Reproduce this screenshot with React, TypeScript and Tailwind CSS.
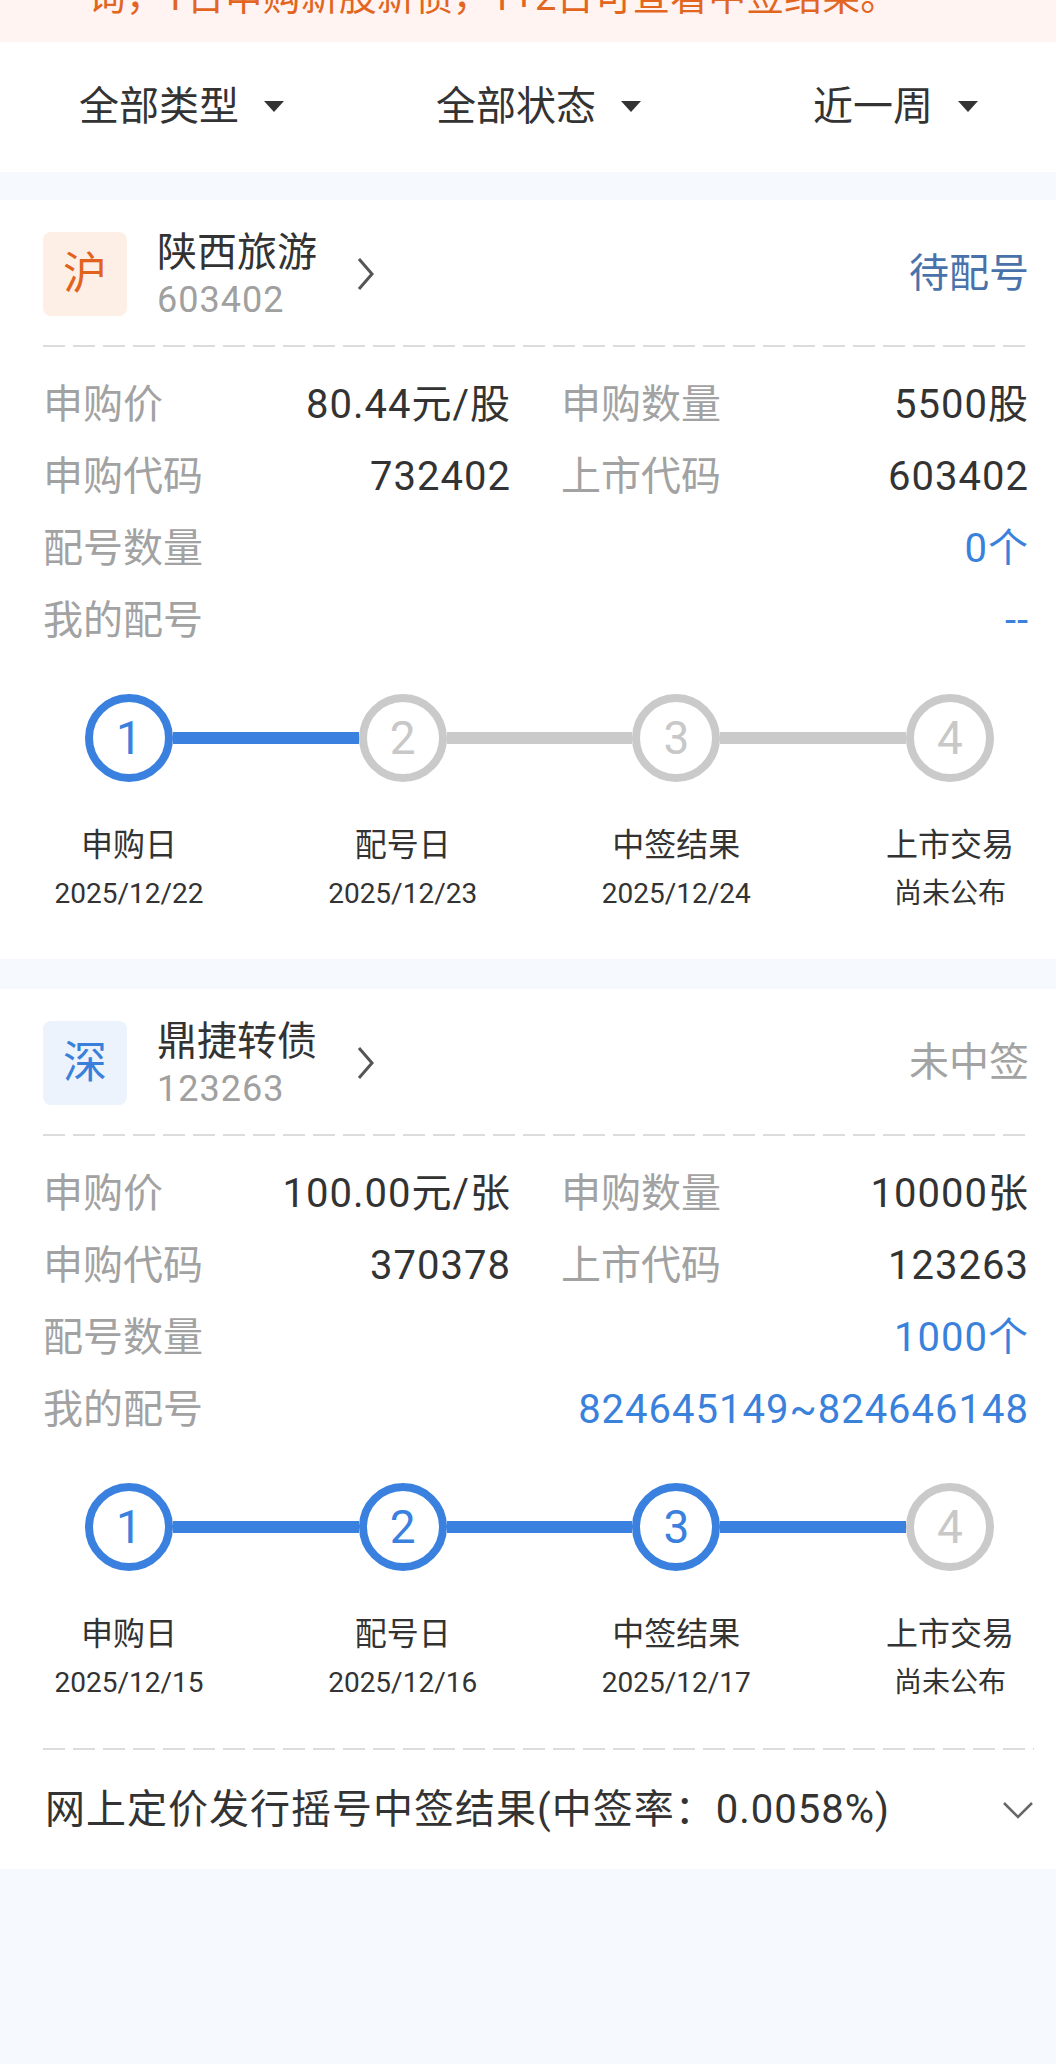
const FONT = { fontFamily: 'Roboto, "Noto Sans CJK SC", "Noto Sans", sans-serif' };

type Step = { title: string; date: string; done: boolean };

type Item = {
  market: string;
  marketTone: "sh" | "sz";
  name: string;
  code: string;
  status: string;
  statusTone: "blue" | "gray";
  price: string;
  qty: string;
  applyCode: string;
  listCode: string;
  matchCount: string;
  myMatch: string;
  steps: Step[];
  result?: string;
};

const items: Item[] = [
  {
    market: "沪",
    marketTone: "sh",
    name: "陕西旅游",
    code: "603402",
    status: "待配号",
    statusTone: "blue",
    price: "80.44元/股",
    qty: "5500股",
    applyCode: "732402",
    listCode: "603402",
    matchCount: "0个",
    myMatch: "--",
    steps: [
      { title: "申购日", date: "2025/12/22", done: true },
      { title: "配号日", date: "2025/12/23", done: false },
      { title: "中签结果", date: "2025/12/24", done: false },
      { title: "上市交易", date: "尚未公布", done: false },
    ],
  },
  {
    market: "深",
    marketTone: "sz",
    name: "鼎捷转债",
    code: "123263",
    status: "未中签",
    statusTone: "gray",
    price: "100.00元/张",
    qty: "10000张",
    applyCode: "370378",
    listCode: "123263",
    matchCount: "1000个",
    myMatch: "824645149~824646148",
    steps: [
      { title: "申购日", date: "2025/12/15", done: true },
      { title: "配号日", date: "2025/12/16", done: true },
      { title: "中签结果", date: "2025/12/17", done: true },
      { title: "上市交易", date: "尚未公布", done: false },
    ],
    result: "网上定价发行摇号中签结果(中签率：0.0058%)",
  },
];

const DashedLine = () => (
  <div className="h-[2px] w-full bg-[repeating-linear-gradient(to_right,#dcdcdc_0px,#dcdcdc_22px,transparent_22px,transparent_30px)]" />
);

const Caret = () => (
  <svg width="20" height="12" viewBox="0 0 20 12" className="shrink-0">
    <polygon points="0,0 20,0 10,11" fill="#333333" />
  </svg>
);

function StepCircle({ n, done }: { n: number; done: boolean }) {
  return (
    <div
      className={
        done
          ? "w-[88px] h-[88px] shrink-0 rounded-full border-[8px] border-[#3a81df] bg-white flex items-center justify-center text-[46px] leading-none text-[#3a81df]"
          : "w-[88px] h-[88px] shrink-0 rounded-full border-[8px] border-[#cacaca] bg-white flex items-center justify-center text-[46px] leading-none text-[#c8c8c8]"
      }
    >
      {n}
    </div>
  );
}

function Steps({ steps }: { steps: Step[] }) {
  return (
    <div className="flex flex-col">
      {/* circles and connectors */}
      <div className="ml-[85px] mr-[62px] flex items-center">
        {steps.map((step, i) => (
          <div key={step.title} className={i < steps.length - 1 ? "flex flex-1 items-center" : "flex items-center"}>
            <StepCircle n={i + 1} done={step.done} />
            {i < steps.length - 1 && (
              <div className={step.done ? "h-[12px] flex-1 bg-[#3a81df]" : "h-[12px] flex-1 bg-[#cacaca]"} />
            )}
          </div>
        ))}
      </div>

      {/* labels */}
      <div className="ml-[39px] w-[1001px] mt-[41px] flex justify-between">
        {steps.map((step) => (
          <div key={step.title} className="w-[180px] flex flex-col items-center">
            <span className="text-[32px] leading-[44px] text-[#333333]">{step.title}</span>
            <span className="mt-[7px] text-[28px] leading-[40px] text-[#333333]">{step.date}</span>
          </div>
        ))}
      </div>
    </div>
  );
}

function Row({ label, value, blue }: { label: string; value: string; blue?: boolean }) {
  return (
    <>
      <span className="text-[#a2a2a2]">{label}</span>
      <span className={blue ? "tracking-[1px] text-[#3a81dc]" : "tracking-[1px] text-[#333333]"}>{value}</span>
    </>
  );
}

function Card({ item }: { item: Item }) {
  const badge =
    item.marketTone === "sh"
      ? "bg-[#fdeee6] text-[#e0621c]"
      : "bg-[#ecf3fd] text-[#3a80da]";
  const status = item.statusTone === "blue" ? "text-[#4a72aa]" : "text-[#a3a3a3]";

  return (
    <div className="bg-white pt-[32px] pb-[45px]">
      <div className="pl-[43px] pr-[27px]">
        {/* header */}
        <div className="flex items-center">
          <div className={`w-[84px] h-[84px] rounded-[8px] flex items-center justify-center text-[44px] leading-none ${badge}`}>
            {item.market}
          </div>
          <div className="ml-[30px] h-[84px] flex flex-col justify-between">
            <span className="text-[40px] leading-[42px] text-[#333333]">{item.name}</span>
            <span className="text-[36px] leading-[40px] tracking-[1px] -mb-[4px] text-[#a0a0a0]">{item.code}</span>
          </div>
          <svg width="18" height="34" viewBox="0 0 18 34" className="ml-[40px] shrink-0">
            <polyline points="2,2 15,17 2,32" fill="none" stroke="#555555" strokeWidth="3" />
          </svg>
          <span className={`ml-auto text-[40px] leading-[48px] ${status}`}>{item.status}</span>
        </div>

        <div className="mt-[29px]">
          <DashedLine />
        </div>

        {/* details */}
        <div className="mt-[22px] grid grid-cols-2 gap-x-[50px] text-[40px]">
          <div className="h-[72px] flex items-center justify-between">
            <Row label="申购价" value={item.price} />
          </div>
          <div className="h-[72px] flex items-center justify-between">
            <Row label="申购数量" value={item.qty} />
          </div>
          <div className="h-[72px] flex items-center justify-between">
            <Row label="申购代码" value={item.applyCode} />
          </div>
          <div className="h-[72px] flex items-center justify-between">
            <Row label="上市代码" value={item.listCode} />
          </div>
          <div className="col-span-2 h-[72px] flex items-center justify-between">
            <Row label="配号数量" value={item.matchCount} blue />
          </div>
          <div className="col-span-2 h-[72px] flex items-center justify-between">
            <Row label="我的配号" value={item.myMatch} blue />
          </div>
        </div>
      </div>

      <div className="mt-[37px]">
        <Steps steps={item.steps} />
      </div>

      {item.result && (
        <div className="pl-[43px] pr-[22px] mt-[45px] -mb-[45px]">
          <DashedLine />
          <div className="h-[119px] flex items-center justify-between">
            <span className="pl-[2px] text-[40px] leading-[48px] tracking-[1px] text-[#333333]">{item.result}</span>
            <svg width="32" height="18" viewBox="0 0 32 18" className="shrink-0">
              <polyline points="2,2 16,16 30,2" fill="none" stroke="#666666" strokeWidth="2.5" />
            </svg>
          </div>
        </div>
      )}
    </div>
  );
}

export default function App() {
  return (
    <div className="w-[1056px] min-h-[2064px] bg-[#f6f9fe]" style={FONT}>
      {/* notice banner (scrolled, only its tail is visible) */}
      <div className="h-[42px] overflow-hidden bg-[#fff4f2] pl-[88px]">
        <p className="-mt-[27px] text-[38px] leading-[48px] whitespace-nowrap text-[#e2661f]">
          询，T日申购新股新债，T+2日可查看中签结果。
        </p>
      </div>

      {/* filters */}
      <div className="h-[130px] bg-white flex items-center pl-[79px]">
        <div className="flex items-center gap-[25px]">
          <span className="text-[40px] leading-[48px] text-[#333333]">全部类型</span>
          <Caret />
        </div>
        <div className="ml-[152px] flex items-center gap-[25px]">
          <span className="text-[40px] leading-[48px] text-[#333333]">全部状态</span>
          <Caret />
        </div>
        <div className="ml-[172px] flex items-center gap-[25px]">
          <span className="text-[40px] leading-[48px] text-[#333333]">近一周</span>
          <Caret />
        </div>
      </div>

      <div className="mt-[28px] flex flex-col gap-[30px]">
        {items.map((item) => (
          <Card key={item.name} item={item} />
        ))}
      </div>
    </div>
  );
}
